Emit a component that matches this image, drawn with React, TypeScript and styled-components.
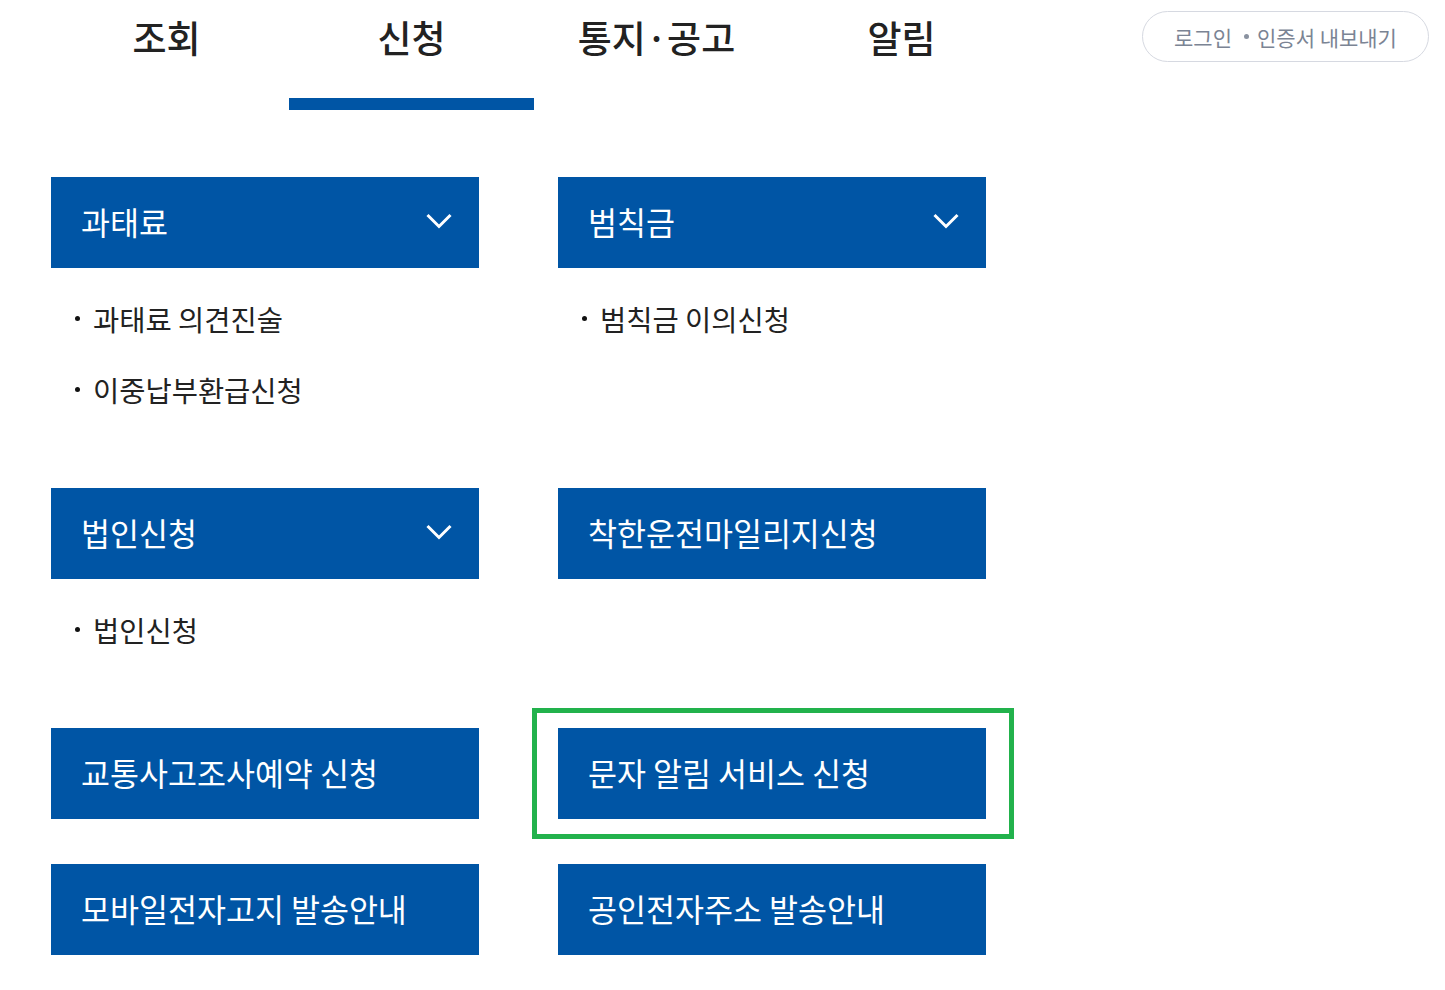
import { createGlobalStyle, styled } from 'styled-components';

const GlobalStyle = createGlobalStyle`
  html, body {
    margin: 0;
    padding: 0;
    background: #ffffff;
  }
  body {
    font-family: 'Noto Sans CJK KR', 'Noto Sans', sans-serif;
    color: #222222;
  }
`;

const Page = styled.div`
  width: 1445px;
  padding-bottom: 30px;
`;

const Header = styled.header`
  display: flex;
  justify-content: space-between;
  align-items: flex-start;
  padding-left: 44px;
  padding-right: 16px;
`;

const Tabs = styled.nav`
  display: flex;
`;

const Tab = styled.a<{ $active?: boolean }>`
  width: 245px;
  height: 110px;
  box-sizing: border-box;
  display: flex;
  justify-content: center;
  border-bottom: 12px solid ${(p) => (p.$active ? '#0055a5' : 'transparent')};
  font-size: 37px;
  line-height: 74px;
  font-weight: 500;
  color: #222222;
  text-decoration: none;
  cursor: pointer;
`;

const LoginButton = styled.button`
  margin-top: 11px;
  width: 287px;
  height: 51px;
  border: 1px solid #d6d9e1;
  border-radius: 26px;
  background: #ffffff;
  display: flex;
  align-items: center;
  justify-content: center;
  gap: 8px;
  font-family: inherit;
  font-size: 21px;
  color: #7b8494;
  cursor: pointer;
`;

const Dot = styled.span`
  width: 5px;
  height: 5px;
  border-radius: 50%;
  background: #8a92a0;
  margin: 0 0 0 4px;
`;

const Menu = styled.div`
  display: grid;
  grid-template-columns: 428px 428px;
  column-gap: 79px;
  row-gap: 45px;
  margin: 67px 0 0 51px;
`;

const Cell = styled.div`
  position: relative;
`;

const MenuButton = styled.button`
  width: 428px;
  height: 91px;
  box-sizing: border-box;
  border: none;
  background: #0055a5;
  color: #ffffff;
  display: flex;
  align-items: center;
  justify-content: space-between;
  padding: 0 27px 3px 30px;
  font-family: inherit;
  font-size: 31.5px;
  font-weight: 400;
  text-align: left;
  cursor: pointer;
`;

const Chevron = () => (
  <svg width="26" height="16" viewBox="0 0 26 16" fill="none">
    <path d="M1.5 2 L13 13.5 L24.5 2" stroke="#ffffff" strokeWidth="3" />
  </svg>
);

const SubList = styled.ul`
  list-style: none;
  margin: 0;
  padding: 15px 0 18px 24px;
`;

const SubItem = styled.li`
  display: flex;
  align-items: center;
  gap: 13px;
  height: 71px;
  font-size: 28.5px;
  color: #222222;
  &::before {
    content: '';
    flex: none;
    width: 5px;
    height: 5px;
    border-radius: 50%;
    background: #111111;
  }
`;

const Highlight = styled.div`
  position: absolute;
  left: -26px;
  top: -20px;
  right: -28px;
  bottom: -20px;
  border: 5px solid #22b24c;
  pointer-events: none;
`;

type MenuEntry = {
  label: string;
  items?: string[];
  highlight?: boolean;
};

const entries: MenuEntry[] = [
  { label: '과태료', items: ['과태료 의견진술', '이중납부환급신청'] },
  { label: '범칙금', items: ['범칙금 이의신청'] },
  { label: '법인신청', items: ['법인신청'] },
  { label: '착한운전마일리지신청' },
  { label: '교통사고조사예약 신청' },
  { label: '문자 알림 서비스 신청', highlight: true },
  { label: '모바일전자고지 발송안내' },
  { label: '공인전자주소 발송안내' },
];

const tabs = ['조회', '신청', '통지·공고', '알림'];

export default function App() {
  return (
    <Page>
      <GlobalStyle />
      <Header>
        <Tabs>
          {tabs.map((t) => (
            <Tab key={t} $active={t === '신청'}>
              {t}
            </Tab>
          ))}
        </Tabs>
        <LoginButton>
          로그인
          <Dot />
          인증서 내보내기
        </LoginButton>
      </Header>
      <Menu>
        {entries.map((e) => (
          <Cell key={e.label}>
            <MenuButton>
              {e.label}
              {e.items && <Chevron />}
            </MenuButton>
            {e.items && (
              <SubList>
                {e.items.map((i) => (
                  <SubItem key={i}>{i}</SubItem>
                ))}
              </SubList>
            )}
            {e.highlight && <Highlight />}
          </Cell>
        ))}
      </Menu>
    </Page>
  );
}
